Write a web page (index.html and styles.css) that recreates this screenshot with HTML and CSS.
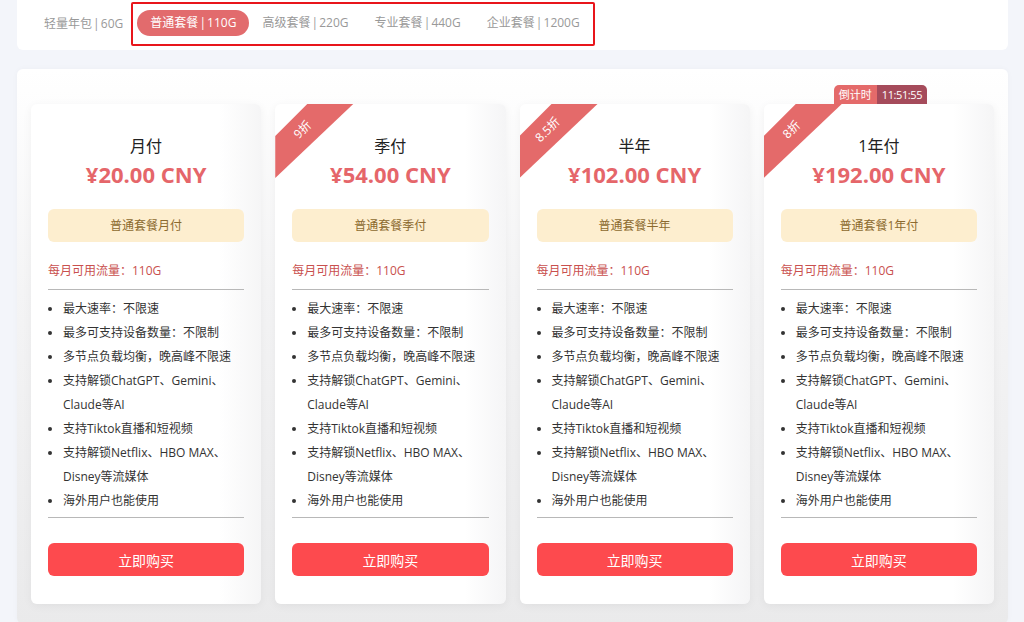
FILE: index.html
```html
<!DOCTYPE html>
<html lang="zh-CN">
<head>
    <meta charset="UTF-8">
    <meta name="viewport" content="width=device-width, initial-scale=1.0">
    <title>套餐购买</title>
    <link rel="stylesheet" href="styles.css">
</head>
<body>
    <div class="topbar">
        <div class="tabs">
            <div class="tab">轻量年包 | 60G</div>
            <div class="tab-group">
                <div class="tab active">普通套餐 | 110G</div>
                <div class="tab">高级套餐 | 220G</div>
                <div class="tab">专业套餐 | 440G</div>
                <div class="tab">企业套餐 | 1200G</div>
            </div>
        </div>
    </div>

    <div class="panel">
        <div class="plan-grid">
            <div class="plan">
                <h3 class="plan-name">月付</h3>
                <div class="plan-price">¥20.00 CNY</div>
                <div class="plan-tag">普通套餐月付</div>
                <div class="plan-traffic">每月可用流量：110G</div>
                <ul class="plan-features">
                    <li>最大速率：不限速</li>
                    <li>最多可支持设备数量：不限制</li>
                    <li>多节点负载均衡，晚高峰不限速</li>
                    <li>支持解锁ChatGPT、Gemini、Claude等AI</li>
                    <li>支持Tiktok直播和短视频</li>
                    <li>支持解锁Netflix、HBO MAX、Disney等流媒体</li>
                    <li>海外用户也能使用</li>
                </ul>
                <button class="buy-button">立即购买</button>
            </div>

            <div class="plan">
                <div class="ribbon"><span>9折</span></div>
                <h3 class="plan-name">季付</h3>
                <div class="plan-price">¥54.00 CNY</div>
                <div class="plan-tag">普通套餐季付</div>
                <div class="plan-traffic">每月可用流量：110G</div>
                <ul class="plan-features">
                    <li>最大速率：不限速</li>
                    <li>最多可支持设备数量：不限制</li>
                    <li>多节点负载均衡，晚高峰不限速</li>
                    <li>支持解锁ChatGPT、Gemini、Claude等AI</li>
                    <li>支持Tiktok直播和短视频</li>
                    <li>支持解锁Netflix、HBO MAX、Disney等流媒体</li>
                    <li>海外用户也能使用</li>
                </ul>
                <button class="buy-button">立即购买</button>
            </div>

            <div class="plan">
                <div class="ribbon"><span>8.5折</span></div>
                <h3 class="plan-name">半年</h3>
                <div class="plan-price">¥102.00 CNY</div>
                <div class="plan-tag">普通套餐半年</div>
                <div class="plan-traffic">每月可用流量：110G</div>
                <ul class="plan-features">
                    <li>最大速率：不限速</li>
                    <li>最多可支持设备数量：不限制</li>
                    <li>多节点负载均衡，晚高峰不限速</li>
                    <li>支持解锁ChatGPT、Gemini、Claude等AI</li>
                    <li>支持Tiktok直播和短视频</li>
                    <li>支持解锁Netflix、HBO MAX、Disney等流媒体</li>
                    <li>海外用户也能使用</li>
                </ul>
                <button class="buy-button">立即购买</button>
            </div>

            <div class="plan">
                <div class="countdown"><span class="countdown-label">倒计时</span><span class="countdown-time">11:51:55</span></div>
                <div class="ribbon"><span>8折</span></div>
                <h3 class="plan-name">1年付</h3>
                <div class="plan-price">¥192.00 CNY</div>
                <div class="plan-tag">普通套餐1年付</div>
                <div class="plan-traffic">每月可用流量：110G</div>
                <ul class="plan-features">
                    <li>最大速率：不限速</li>
                    <li>最多可支持设备数量：不限制</li>
                    <li>多节点负载均衡，晚高峰不限速</li>
                    <li>支持解锁ChatGPT、Gemini、Claude等AI</li>
                    <li>支持Tiktok直播和短视频</li>
                    <li>支持解锁Netflix、HBO MAX、Disney等流媒体</li>
                    <li>海外用户也能使用</li>
                </ul>
                <button class="buy-button">立即购买</button>
            </div>
        </div>
    </div>
</body>
</html>
```

FILE: styles.css
```css
body {
    margin: 0;
    background: #f3f5fa;
    color: #333;
    font-family: "Open Sans", "Noto Sans CJK SC", sans-serif;
    overflow: hidden;
}

.topbar {
    margin: 0 16px 0 17px;
    height: 50px;
    box-sizing: border-box;
    padding: 2px 0 0 14px;
    background: #fff;
    border-radius: 0 0 6px 6px;
}

.tabs {
    display: flex;
    align-items: center;
}

.tab-group {
    display: flex;
    align-items: center;
    height: 44px;
    box-sizing: border-box;
    margin-left: -5px;
    border: 2px solid #e8151b;
    border-radius: 2px;
    padding: 4px 0 6px 4px;
}

.tab {
    height: 26px;
    line-height: 26px;
    padding: 0 13px;
    font-size: 12px;
    word-spacing: -2px;
    color: #999;
    border-radius: 13px;
    white-space: nowrap;
}

.tab.active {
    background: #e26b6d;
    color: #fff;
}

.panel {
    margin: 19px 16px 0 17px;
    padding: 35px 14px 20px;
    border-radius: 6px;
    background: linear-gradient(to bottom, #ffffff 0%, #f4f4f5 40%, #eaeaeb 100%);
    box-shadow: 0 0 6px rgba(0, 0, 0, 0.03);
}

.plan-grid {
    display: grid;
    grid-template-columns: repeat(4, 1fr);
    gap: 14px;
}

.plan {
    position: relative;
    background: linear-gradient(to right, #fff 0%, #fff 82%, #f5f5f6 100%);
    border-radius: 6px;
    padding: 30px 17px 28px;
    box-shadow: 0 2px 10px rgba(0, 0, 0, 0.05);
    display: flex;
    flex-direction: column;
}

.plan-name {
    margin: 0;
    text-align: center;
    font-size: 16px;
    font-weight: normal;
    line-height: 24px;
    color: #222;
}

.plan-price {
    margin-top: 1px;
    text-align: center;
    font-size: 22px;
    font-weight: bold;
    line-height: 30px;
    color: #e5666a;
}

.plan-tag {
    margin-top: 20px;
    height: 33px;
    line-height: 33px;
    text-align: center;
    background: #fdeecf;
    color: #8c6a2e;
    font-size: 12px;
    border-radius: 6px;
}

.plan-traffic {
    margin-top: 19px;
    font-size: 12px;
    line-height: 20px;
    color: #c9504e;
    padding-bottom: 8px;
    border-bottom: 1px solid #b8b8b8;
}

.plan-features {
    margin: 7px 0 0;
    padding: 0 0 4px 15px;
    font-size: 12px;
    line-height: 24px;
    color: #333;
    border-bottom: 1px solid #b8b8b8;
}

.buy-button {
    margin-top: 25px;
    height: 33px;
    border: none;
    border-radius: 6px;
    background: #fd4a4e;
    color: #fff;
    font-family: inherit;
    font-size: 14px;
    cursor: pointer;
}

.ribbon {
    position: absolute;
    top: 0;
    left: 0;
    width: 80px;
    height: 80px;
    background: #e46a6a;
    clip-path: polygon(32px 0, 78px 0, 0 74px, 0 32px);
}

.ribbon span {
    position: absolute;
    left: 27px;
    top: 25px;
    transform: translate(-50%, -50%) rotate(-45deg);
    color: #fff;
    font-size: 12px;
    white-space: nowrap;
}

.countdown {
    position: absolute;
    top: -19px;
    left: 70px;
    display: flex;
    height: 19px;
    line-height: 19px;
    font-size: 11px;
    color: #fff;
    border-radius: 5px 5px 0 0;
    overflow: hidden;
}

.countdown-label {
    background: #e46a6a;
    padding: 0 5px;
}

.countdown-time {
    background: #a54b5b;
    padding: 0 5px;
    letter-spacing: -0.4px;
}
```
